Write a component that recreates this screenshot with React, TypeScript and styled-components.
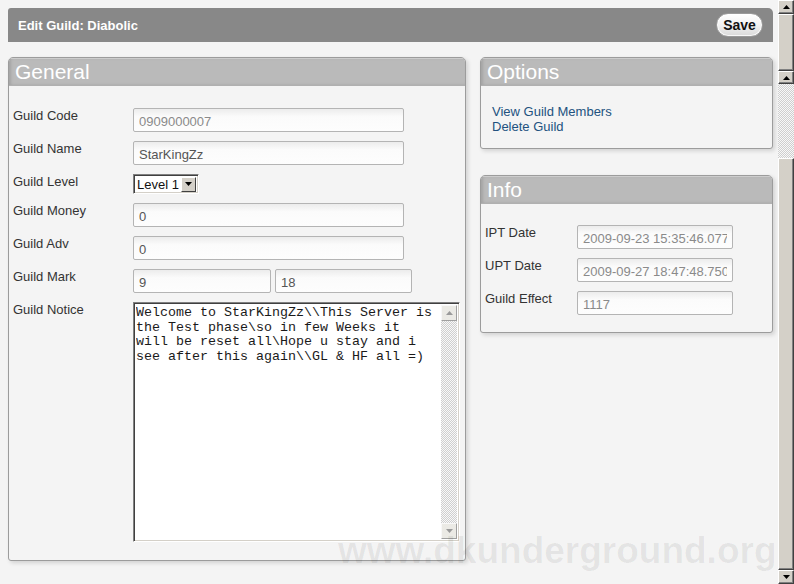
import React from 'react';
import styled, { createGlobalStyle } from 'styled-components';

const Global = createGlobalStyle`
  html, body { margin: 0; padding: 0; background: #f4f4f4; }
  body {
    font-family: "Liberation Sans", Arial, sans-serif;
    font-size: 13px;
    color: #333;
    overflow: hidden;
  }
`;

const Page = styled.div`
  position: relative;
  display: flex;
  width: 794px;
  height: 584px;
  overflow: hidden;
  background: #f4f4f4;
`;

const Main = styled.div`
  flex: 1;
  padding: 8px 5px 0 8px;
`;

const HeaderBar = styled.div`
  height: 34px;
  background: #888888;
  border-radius: 3px 5px 0 0;
  display: flex;
  align-items: center;
  justify-content: space-between;
  padding: 0 10px;
`;

const HeaderTitle = styled.div`
  color: #fff;
  font-weight: bold;
  font-size: 13px;
`;

const SaveButton = styled.button`
  height: 24px;
  width: 47px;
  padding: 0;
  border-radius: 12px;
  border: 1px solid #9a9a9a;
  background: linear-gradient(#ffffff 0%, #f2f2f2 50%, #d9d9d9 100%);
  box-shadow: inset 0 0 0 1px rgba(255, 255, 255, 0.8);
  font-family: "Liberation Sans", Arial, sans-serif;
  font-weight: bold;
  font-size: 14px;
  color: #111;
  line-height: 22px;
`;

const Columns = styled.div`
  display: grid;
  grid-template-columns: 458px 293px;
  column-gap: 14px;
  align-items: start;
  margin-top: 15px;
`;

const Stack = styled.div`
  display: flex;
  flex-direction: column;
  gap: 26px;
`;

const Panel = styled.section`
  border: 1px solid #9c9c9c;
  border-radius: 5px 5px 3px 3px;
  background: #f4f4f4;
  box-shadow: 2px 2px 4px rgba(0, 0, 0, 0.14);
  overflow: hidden;
`;

const PanelHeader = styled.div`
  height: 28px;
  background: #bababa;
  box-shadow: inset 0 1px 0 #cdcdcd, inset 2px 0 3px rgba(0, 0, 0, 0.12);
  color: #fff;
  font-size: 21px;
  line-height: 28px;
  padding-left: 6px;
  border-bottom: 1px solid #b0b0b0;
  box-sizing: border-box;
`;

const FormBody = styled.div<{ $top: number; $bottom: number; $labelWidth: number }>`
  display: grid;
  grid-template-columns: ${(p) => p.$labelWidth}px auto;
  justify-content: start;
  row-gap: 9px;
  padding: ${(p) => p.$top}px 4px ${(p) => p.$bottom}px 4px;
  align-items: start;
`;

const Label = styled.div`
  font-size: 13px;
  line-height: 15px;
  color: #333;
`;

const FieldRow = styled.div`
  display: flex;
  gap: 4px;
`;

const TextInput = styled.input<{ $w: number; $muted?: boolean }>`
  box-sizing: border-box;
  width: ${(p) => p.$w}px;
  height: 24px;
  border: 1px solid #b4b4b4;
  border-radius: 2px;
  background: linear-gradient(#ececec 0%, #fbfbfb 35%, #fdfdfd 100%);
  padding: 2px 5px 0 5px;
  font-family: "Liberation Sans", Arial, sans-serif;
  font-size: 13px;
  color: ${(p) => (p.$muted ? '#8a8a8a' : '#555')};
  outline: none;
`;

const SelectBox = styled.div`
  box-sizing: border-box;
  width: 66px;
  height: 20px;
  display: flex;
  align-items: center;
  justify-content: space-between;
  background: #fff;
  border: 1px solid;
  border-color: #808080 #ffffff #ffffff #808080;
  box-shadow: inset 1px 1px 0 #404040, inset -1px -1px 0 #d4d0c8;
  padding: 2px 2px 2px 3px;
  font-size: 13px;
  color: #111;
`;

const SelectButton = styled.div`
  box-sizing: border-box;
  width: 15px;
  height: 15px;
  background: #d4d0c8;
  border: 1px solid;
  border-color: #ffffff #404040 #404040 #ffffff;
  display: flex;
  align-items: center;
  justify-content: center;
`;

const NoticeBox = styled.div`
  box-sizing: border-box;
  width: 327px;
  height: 240px;
  display: flex;
  background: #fff;
  border: 1px solid;
  border-color: #808080 #ffffff #ffffff #808080;
  box-shadow: inset 1px 1px 0 #404040, inset -1px -1px 0 #d4d0c8;
  padding: 2px;
`;

const NoticeArea = styled.textarea`
  flex: 1;
  border: none;
  outline: none;
  resize: none;
  overflow: hidden;
  margin: 0;
  padding: 1px 4px 0 0;
  font-family: "Liberation Mono", "Courier New", monospace;
  font-size: 13.33px;
  line-height: 14.5px;
  color: #1a1a1a;
  background: #fff;
`;

const MiniScroll = styled.div`
  width: 16px;
  display: flex;
  flex-direction: column;
`;

const Hatch = styled.div<{ $h?: number }>`
  ${(p) => (p.$h ? `height: ${p.$h}px;` : 'flex: 1;')}
  background: repeating-conic-gradient(#cfcfcf 0 25%, #f8f8f8 0 50%) 0 0 / 2px 2px;
`;

const FlatArrow = styled.div`
  box-sizing: border-box;
  height: 16px;
  background: #ebeae5;
  border: 1px solid;
  border-color: #f8f8f8 #a0a0a0 #a0a0a0 #f8f8f8;
  display: flex;
  align-items: center;
  justify-content: center;
`;

const LinksBody = styled.div`
  display: flex;
  flex-direction: column;
  padding: 18px 11px 14px 11px;
`;

const Link = styled.a`
  color: #22527f;
  font-size: 13px;
  line-height: 15px;
  text-decoration: none;
`;

const PageScroll = styled.div`
  width: 16px;
  height: 584px;
  display: flex;
  flex-direction: column;
  background: #d4d0c8;
`;

const RaisedBtn = styled.div<{ $h: number }>`
  box-sizing: border-box;
  height: ${(p) => p.$h}px;
  background: #d4d0c8;
  border: 1px solid;
  border-color: #ffffff #404040 #404040 #ffffff;
  box-shadow: inset -1px -1px 0 #808080;
  display: flex;
  align-items: center;
  justify-content: center;
`;

const Thumb = styled.div<{ $h?: number }>`
  box-sizing: border-box;
  ${(p) => (p.$h ? `height: ${p.$h}px;` : 'flex: 1;')}
  background: #d4d0c8;
  border: 1px solid;
  border-color: #ffffff #404040 #404040 #ffffff;
  box-shadow: inset -1px -1px 0 #808080;
`;

const Watermark = styled.div`
  position: absolute;
  left: 338px;
  top: 532px;
  font-family: "Liberation Sans", Arial, sans-serif;
  font-weight: bold;
  font-size: 37px;
  line-height: 37px;
  color: rgba(0, 0, 0, 0.065);
  pointer-events: none;
  white-space: nowrap;
`;

const Tri = ({ down, color = '#000' }: { down?: boolean; color?: string }) => (
  <svg width="7" height="4" viewBox="0 0 7 4">
    <polygon points={down ? '0,0 7,0 3.5,4' : '0,4 7,4 3.5,0'} fill={color} />
  </svg>
);

const notice =
  'Welcome to StarKingZz\\\\This Server is the Test phase\\so in few Weeks it will be reset all\\Hope u stay and i see after this again\\\\GL & HF all =)';

export default function App() {
  return (
    <Page>
      <Global />
      <Main>
        <HeaderBar>
          <HeaderTitle>Edit Guild: Diabolic</HeaderTitle>
          <SaveButton>Save</SaveButton>
        </HeaderBar>
        <Columns>
          <Panel>
            <PanelHeader>General</PanelHeader>
            <FormBody $top={22} $bottom={18} $labelWidth={120}>
              <Label>Guild Code</Label>
              <TextInput $w={271} $muted readOnly value="0909000007" />
              <Label>Guild Name</Label>
              <TextInput $w={271} readOnly value="StarKingZz" />
              <Label>Guild Level</Label>
              <SelectBox>
                <span>Level 1</span>
                <SelectButton>
                  <Tri down />
                </SelectButton>
              </SelectBox>
              <Label>Guild Money</Label>
              <TextInput $w={271} readOnly value="0" />
              <Label>Guild Adv</Label>
              <TextInput $w={271} readOnly value="0" />
              <Label>Guild Mark</Label>
              <FieldRow>
                <TextInput $w={138} readOnly value="9" />
                <TextInput $w={137} readOnly value="18" />
              </FieldRow>
              <Label>Guild Notice</Label>
              <NoticeBox>
                <NoticeArea readOnly value={notice} />
                <MiniScroll>
                  <FlatArrow>
                    <Tri color="#9a9a9a" />
                  </FlatArrow>
                  <Hatch />
                  <FlatArrow>
                    <Tri down color="#9a9a9a" />
                  </FlatArrow>
                </MiniScroll>
              </NoticeBox>
            </FormBody>
          </Panel>
          <Stack>
            <Panel>
              <PanelHeader>Options</PanelHeader>
              <LinksBody>
                <Link href="#">View Guild Members</Link>
                <Link href="#">Delete Guild</Link>
              </LinksBody>
            </Panel>
            <Panel>
              <PanelHeader>Info</PanelHeader>
              <FormBody $top={21} $bottom={17} $labelWidth={92}>
                <Label>IPT Date</Label>
                <TextInput $w={156} $muted readOnly value="2009-09-23 15:35:46.077" />
                <Label>UPT Date</Label>
                <TextInput $w={156} $muted readOnly value="2009-09-27 18:47:48.750" />
                <Label>Guild Effect</Label>
                <TextInput $w={156} $muted readOnly value="1117" />
              </FormBody>
            </Panel>
          </Stack>
        </Columns>
      </Main>
      <PageScroll>
        <RaisedBtn $h={14}>
          <Tri />
        </RaisedBtn>
        <Thumb $h={57} />
        <RaisedBtn $h={13}>
          <Tri />
        </RaisedBtn>
        <Hatch $h={74} />
        <Thumb />
        <RaisedBtn $h={14}>
          <Tri down />
        </RaisedBtn>
      </PageScroll>
      <Watermark>www.dkunderground.org</Watermark>
    </Page>
  );
}
